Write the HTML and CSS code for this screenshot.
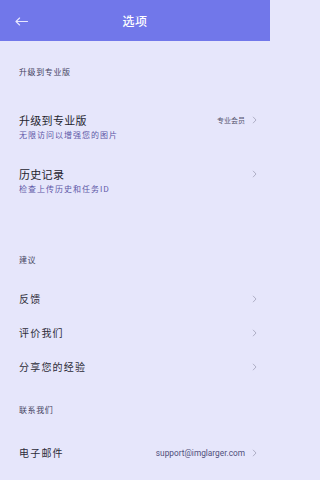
FILE: index.html
```html
<!DOCTYPE html>
<html lang="zh">
<head>
<meta charset="utf-8">
<link rel="stylesheet" href="styles.css">
</head>
<body>
<div class="page">
  <header class="topbar">
    <svg class="back" width="13" height="9" viewBox="0 0 13 9"><path d="M12.5 4.5H1.2M4.6 1L1 4.5 4.6 8" fill="none" stroke="#e8e8ff" stroke-width="1.1" stroke-linecap="round" stroke-linejoin="round"/></svg>
    <div class="title">选项</div>
  </header>

  <section class="section">
    <div class="label label-first">升级到专业版</div>
    <div class="row row-tall">
      <div class="texts">
        <div class="main">升级到专业版</div>
        <div class="sub">无限访问以增强您的图片</div>
      </div>
      <div class="right"><span class="value">专业会员</span><svg class="chev" width="5" height="8" viewBox="0 0 5 8"><path d="M1 0.8L4 4 1 7.2" fill="none" stroke="#a9a9bf" stroke-width="0.9"/></svg></div>
    </div>
    <div class="row row-tall">
      <div class="texts">
        <div class="main">历史记录</div>
        <div class="sub">检查上传历史和任务ID</div>
      </div>
      <div class="right"><svg class="chev" width="5" height="8" viewBox="0 0 5 8"><path d="M1 0.8L4 4 1 7.2" fill="none" stroke="#a9a9bf" stroke-width="0.9"/></svg></div>
    </div>
  </section>

  <section class="section">
    <div class="label label-second">建议</div>
    <div class="row">
      <div class="item">反馈</div>
      <div class="right"><svg class="chev" width="5" height="8" viewBox="0 0 5 8"><path d="M1 0.8L4 4 1 7.2" fill="none" stroke="#a9a9bf" stroke-width="0.9"/></svg></div>
    </div>
    <div class="row">
      <div class="item">评价我们</div>
      <div class="right"><svg class="chev" width="5" height="8" viewBox="0 0 5 8"><path d="M1 0.8L4 4 1 7.2" fill="none" stroke="#a9a9bf" stroke-width="0.9"/></svg></div>
    </div>
    <div class="row">
      <div class="item">分享您的经验</div>
      <div class="right"><svg class="chev" width="5" height="8" viewBox="0 0 5 8"><path d="M1 0.8L4 4 1 7.2" fill="none" stroke="#a9a9bf" stroke-width="0.9"/></svg></div>
    </div>
  </section>

  <section class="section">
    <div class="label label-third">联系我们</div>
    <div class="row">
      <div class="item">电子邮件</div>
      <div class="right"><span class="value email">support@imglarger.com</span><svg class="chev" width="5" height="8" viewBox="0 0 5 8"><path d="M1 0.8L4 4 1 7.2" fill="none" stroke="#a9a9bf" stroke-width="0.9"/></svg></div>
    </div>
  </section>
</div>
</body>
</html>
```
FILE: styles.css
```css
html, body {
  margin: 0;
  padding: 0;
  background: #e6e6fb;
}
body {
  height: 480px;
  overflow: hidden;
  font-family: Roboto, "Noto Sans", "Noto Sans CJK SC", sans-serif;
}
.page {
  width: 270px;
  display: flex;
  flex-direction: column;
}
.topbar {
  position: relative;
  height: 41px;
  background: #7177ea;
  display: flex;
  align-items: center;
  justify-content: center;
}
.back {
  position: absolute;
  left: 15px;
  top: 17px;
}
.title {
  color: #ffffff;
  font-family: "Noto Sans CJK SC", sans-serif;
  font-size: 12px;
  font-weight: 500;
  line-height: 16px;
  letter-spacing: 0.5px;
}
.section {
  display: flex;
  flex-direction: column;
}
.label {
  padding: 0 19px;
  font-family: "Noto Sans CJK SC", sans-serif;
  font-size: 8px;
  line-height: 14px;
  color: #45445f;
  letter-spacing: 0.6px;
}
.label-first { padding-top: 24px; padding-bottom: 21px; }
.label-second { padding-top: 45px; padding-bottom: 15px; }
.label-third { padding-top: 19px; padding-bottom: 19px; }
.row {
  display: flex;
  align-items: center;
  justify-content: space-between;
  padding: 9px 13px 9px 19px;
  line-height: 16px;
}
.row-tall {
  padding-top: 12px;
  padding-bottom: 12px;
  align-items: flex-start;
}
.texts {
  display: flex;
  flex-direction: column;
}
.main {
  font-family: "Noto Sans CJK SC", sans-serif;
  font-size: 11px;
  line-height: 16px;
  color: #25242e;
  letter-spacing: 0.3px;
}
.sub {
  font-family: "Noto Sans CJK SC", sans-serif;
  font-size: 8px;
  line-height: 14px;
  color: #5d56a6;
  letter-spacing: 1px;
}
.item {
  font-family: "Noto Sans CJK SC", sans-serif;
  font-size: 10px;
  color: #2d2c38;
  letter-spacing: 1.2px;
}
.right {
  display: flex;
  align-items: center;
  gap: 7px;
  height: 16px;
}
.value {
  font-family: "Noto Sans CJK SC", sans-serif;
  font-size: 7px;
  color: #55546e;
}
.email {
  font-family: Roboto, sans-serif;
  font-size: 8.3px;
  color: #4f4e7a;
}
.chev {
  display: block;
}
```
